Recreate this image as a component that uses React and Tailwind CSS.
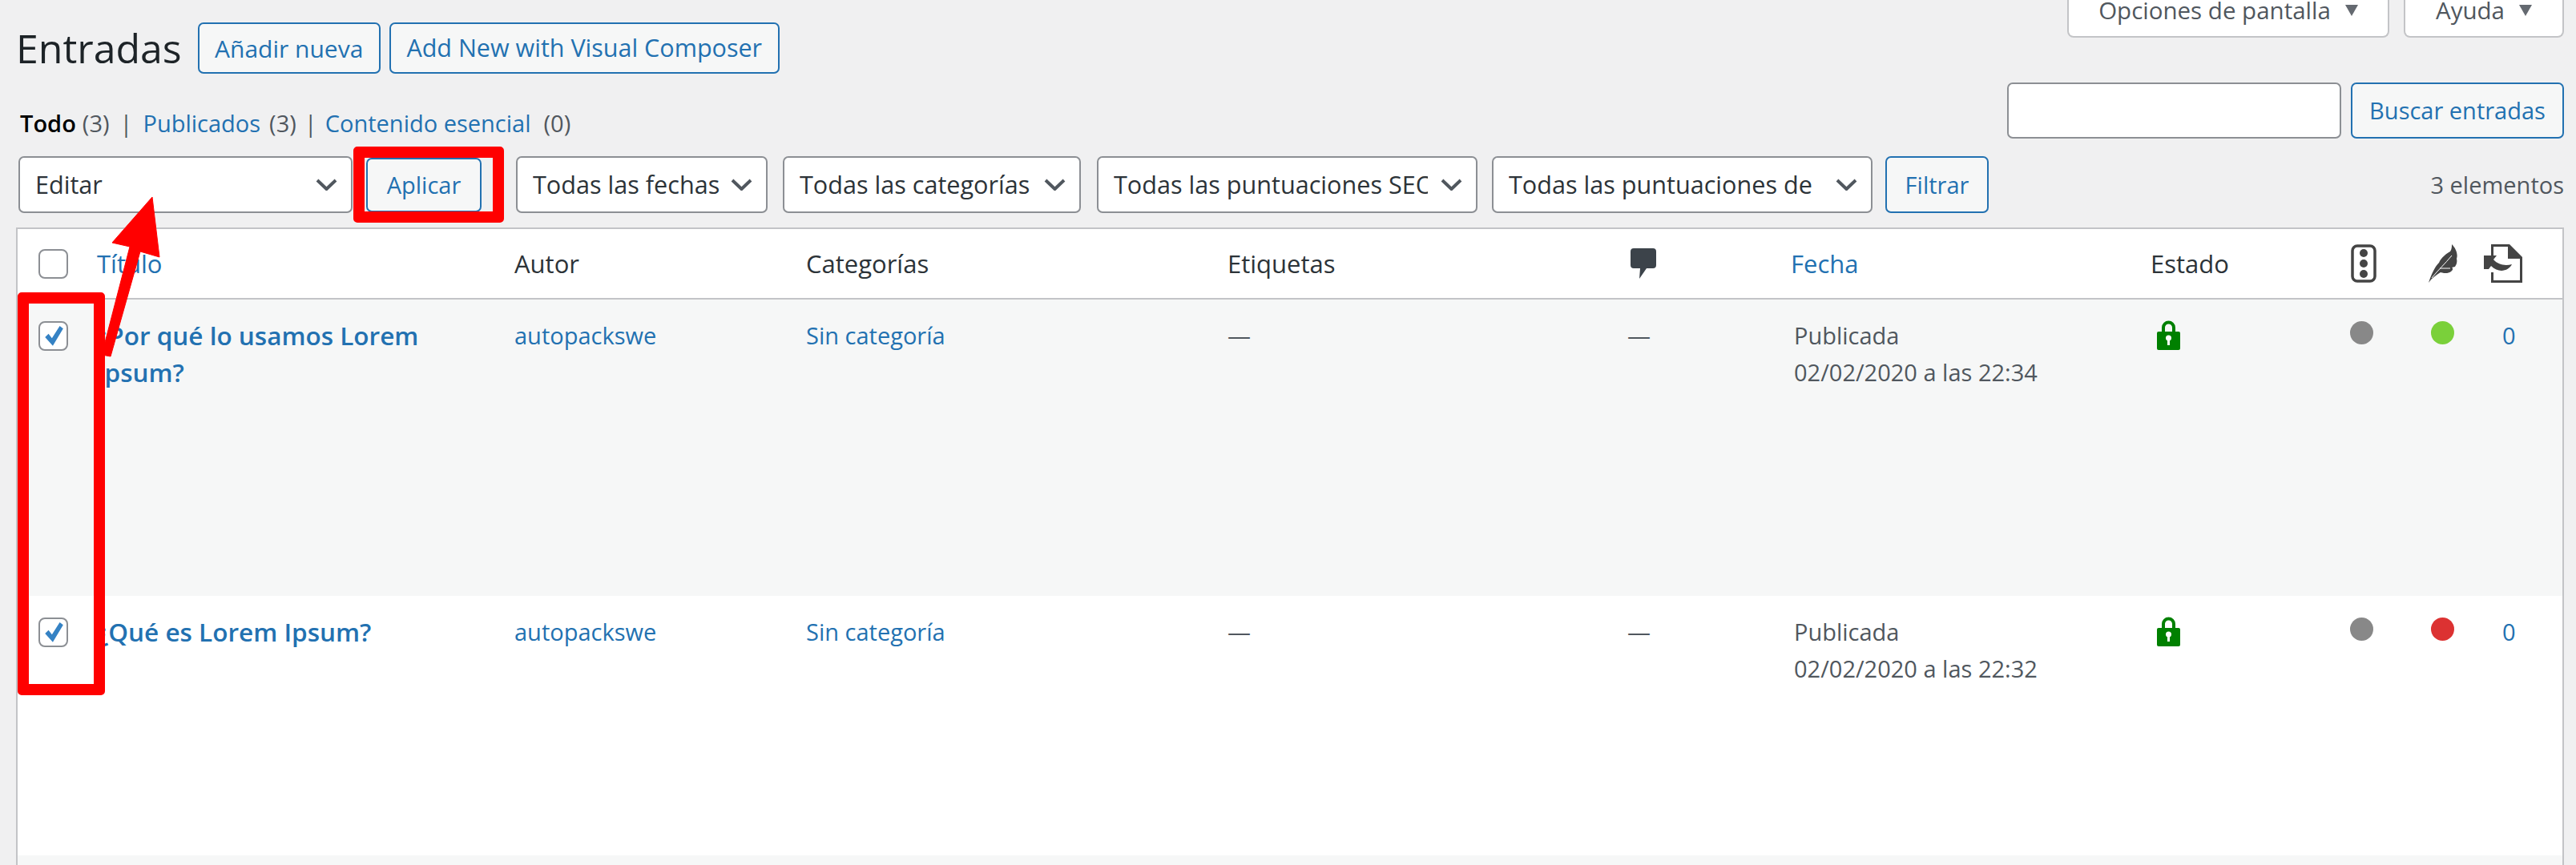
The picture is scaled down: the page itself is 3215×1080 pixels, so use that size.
const Chevron = () => (
  <svg viewBox="0 0 27 15" className="w-[27px] h-[15px] shrink-0">
    <path d="M2 2 L13.5 13 L25 2" fill="none" stroke="#50575e" strokeWidth="4" />
  </svg>
);

const Caret = () => (
  <svg viewBox="0 0 16 14" className="w-[16px] h-[14px] shrink-0">
    <path d="M0 0 H16 L8 14 Z" fill="#646970" />
  </svg>
);

function Select({ label, className, labelClass = 'mr-[8px]' }) {
  return (
    <div className={`h-[71px] flex items-center justify-between pl-[19px] pr-[17px] bg-white border-2 border-[#8c8f94] rounded-[7px] text-[30.6px] text-[#2c3338] ${className}`}>
      <span className={`overflow-hidden whitespace-nowrap ${labelClass}`}>{label}</span>
      <Chevron />
    </div>
  );
}

function OutlineButton({ children, className }) {
  return (
    <div className={`flex items-center justify-center bg-[#f6f7f7] border-2 border-[#2271b1] rounded-[7px] text-[#2271b1] whitespace-nowrap ${className}`}>
      {children}
    </div>
  );
}

function Checkbox({ checked }) {
  return (
    <div className="w-[37px] h-[37px] bg-white border-2 border-[#8c8f94] rounded-[8px] flex items-center justify-center">
      {checked && (
        <svg viewBox="0 0 24 26" className="w-[26px] h-[28px]">
          <path d="M2 14 L6 10 L10 15 L19 1 L23 4 L11 24 Z" fill="#3582c4" />
        </svg>
      )}
    </div>
  );
}

const CommentIcon = () => (
  <svg viewBox="0 0 32 38" className="w-[32px] h-[38px]">
    <path d="M4 0 H28 Q32 0 32 4 V21 Q32 25 28 25 H20 L11 38 L12 25 H4 Q0 25 0 21 V4 Q0 0 4 0 Z" fill="#3c434a" />
  </svg>
);

const TrafficIcon = () => (
  <svg viewBox="0 0 32 48" className="w-[32px] h-[48px]">
    <rect x="2" y="2" width="28" height="44" rx="6" fill="none" stroke="#444" strokeWidth="3.5" />
    <circle cx="16" cy="11" r="5" fill="#444" />
    <circle cx="16" cy="24" r="5" fill="#444" />
    <circle cx="16" cy="37" r="5" fill="#444" />
  </svg>
);

const FeatherIcon = () => (
  <svg viewBox="0 0 36 48" className="w-[36px] h-[48px]">
    <path d="M0 48 C4 36 8 28 13 23 C16 16 22 12 27 9 C29 6 29 3 29 0 C34 5 37 12 35 18 C36 22 35 25 33 28 L29 29 C31 30 30 33 28 34 C24 37 19 36 15 35 C10 38 4 42 0 48 Z" fill="#444" />
    <path d="M4 42 C12 32 20 25 29 14 M14 30 L27 30" fill="none" stroke="#fff" strokeWidth="1" />
  </svg>
);

const LinkedPageIcon = () => (
  <svg viewBox="0 0 48 48" className="w-[48px] h-[48px]">
    <path d="M9 14 V0 H32 L48 16 V48 H9 V35 H12 V45 H45 V18 H30 V3 H12 V14 Z" fill="#444" />
    <path d="M0 14 H16 L12 19 C18 26 27 27 35 25 C31 33 19 37 9 27 L6 31 H0 Z" fill="#444" />
  </svg>
);

const LockIcon = () => (
  <svg viewBox="0 0 29 37" className="w-[29px] h-[37px]">
    <path d="M6 15 V9 A8.5 8.5 0 0 1 23 9 V15 H19 V9 A4.5 4.5 0 0 0 10 9 V15 Z" fill="#008000" />
    <path d="M2 14 H27 Q29 14 29 16 V35 Q29 37 27 37 H2 Q0 37 0 35 V16 Q0 14 2 14 Z" fill="#008000" />
    <circle cx="14.5" cy="22" r="3.5" fill="#fff" />
    <rect x="13" y="23" width="3" height="8" fill="#fff" />
  </svg>
);

const Dot = ({ color }) => <div className={`w-[29px] h-[29px] rounded-full ${color}`} />;

const gridCols = 'grid grid-cols-[80px_521px_364px_526px_503px_200px_449px_250px_97px_67px_1fr]';

function PostRow({ title, date, seoDot, bg, height }) {
  return (
    <div className={`${gridCols} ${bg} ${height} text-[29px] leading-[46px] pt-[22px]`}>
      <div className="pl-[26px] pt-[5px]"><Checkbox checked /></div>
      <a className="pl-[19px] pr-[50px] text-[31.5px] font-semibold text-[#2271b1]">{title}</a>
      <a className="pl-[19px] text-[#2271b1]">autopackswe</a>
      <a className="pl-[19px] text-[#2271b1]">Sin categoría</a>
      <div className="pl-[19px] text-[#50575e]">—</div>
      <div className="pl-[15px] text-[#50575e]">—</div>
      <div className="pl-[23px] text-[#50575e]">
        <div>Publicada</div>
        <div>{date}</div>
      </div>
      <div className="pl-[27px] pt-[4px]"><LockIcon /></div>
      <div className="pl-[18px] pt-[5px]"><Dot color="bg-[#888888]" /></div>
      <div className="pl-[22px] pt-[5px]"><Dot color={seoDot} /></div>
      <a className="pl-[44px] text-[#2271b1]">0</a>
    </div>
  );
}

export default function App() {
  return (
    <div className="relative h-[1080px] overflow-hidden bg-[#f0f0f1] pl-[20px] pr-[15px] text-[#2c3338] font-['Open_Sans','Noto_Sans',sans-serif]">
      {/* Top area */}
      <div className="flex justify-between h-[195px]">
        <div>
          <div className="flex items-center pt-[28px]">
            <h1 className="text-[50px] leading-[64px] text-[#1d2327] mr-[20px]">Entradas</h1>
            <OutlineButton className="w-[228px] h-[64px] font-medium text-[30px] mr-[11px]">Añadir nueva</OutlineButton>
            <OutlineButton className="w-[487px] h-[64px] font-medium text-[30.5px]">Add New with Visual Composer</OutlineButton>
          </div>
          <div className="flex items-center mt-[43px] pl-[5px] text-[29px] leading-[38px] text-[#50575e]">
            <span className="font-semibold text-black">Todo</span>
            <span className="ml-[8px]">(3)</span>
            <span className="mx-[13px]">|</span>
            <a className="text-[#2271b1]">Publicados</a>
            <span className="ml-[11px]">(3)</span>
            <span className="mx-[10px]">|</span>
            <a className="text-[#2271b1]">Contenido esencial</a>
            <span className="ml-[16px]">(0)</span>
          </div>
        </div>
        <div className="flex flex-col items-end">
          <div className="flex gap-[18px] text-[29.5px] text-[#50575e]">
            <div className="w-[402px] h-[47px] bg-white border-2 border-t-0 border-[#c3c4c7] rounded-b-[8px] flex items-start justify-center gap-[18px] leading-[26px]">
              <span>Opciones de pantalla</span>
              <div className="pt-[6px]"><Caret /></div>
            </div>
            <div className="w-[200px] h-[47px] bg-white border-2 border-t-0 border-[#c3c4c7] rounded-b-[8px] flex items-start justify-center gap-[18px] leading-[26px]">
              <span>Ayuda</span>
              <div className="pt-[6px]"><Caret /></div>
            </div>
          </div>
          <div className="flex mt-[56px] gap-[12px]">
            <div className="w-[417px] h-[70px] bg-white border-2 border-[#8c8f94] rounded-[7px]" />
            <OutlineButton className="w-[266px] h-[70px] text-[29px]">Buscar entradas</OutlineButton>
          </div>
        </div>
      </div>

      {/* Bulk actions and filters */}
      <div className="flex items-center h-[71px] pl-[3px]">
        <Select label="Editar" className="w-[417px]" />
        <OutlineButton className="w-[144px] h-[68px] ml-[17px] text-[29px]">Aplicar</OutlineButton>
        <Select label="Todas las fechas" className="w-[314px] ml-[43px]" />
        <Select label="Todas las categorías" className="w-[372px] ml-[19px]" />
        <Select label="Todas las puntuaciones SEO" className="w-[475px] ml-[20px]" labelClass="mr-[16px]" />
        <Select label="Todas las puntuaciones de" className="w-[475px] ml-[18px]" />
        <OutlineButton className="w-[129px] h-[71px] ml-[16px] text-[29px]">Filtrar</OutlineButton>
        <span className="ml-auto text-[29px] text-[#50575e]">3 elementos</span>
      </div>

      {/* Table */}
      <div className="mt-[18px] bg-white border-2 border-[#c3c4c7] border-b-0">
        <div className={`${gridCols} items-center h-[88px] border-b-2 border-[#c3c4c7] text-[31px]`}>
          <div className="pl-[26px]"><Checkbox /></div>
          <a className="pl-[19px] text-[#2271b1]">Título</a>
          <div className="pl-[19px]">Autor</div>
          <div className="pl-[19px]">Categorías</div>
          <div className="pl-[19px]">Etiquetas</div>
          <div className="pl-[19px]"><CommentIcon /></div>
          <a className="pl-[19px] text-[#2271b1]">Fecha</a>
          <div className="pl-[19px]">Estado</div>
          <div className="pl-[19px]"><TrafficIcon /></div>
          <div className="pl-[19px]"><FeatherIcon /></div>
          <div className="pl-[21px]"><LinkedPageIcon /></div>
        </div>
        <PostRow
          title="¿Por qué lo usamos Lorem Ipsum?"
          date="02/02/2020 a las 22:34"
          seoDot="bg-[#7ad03a]"
          bg="bg-[#f6f7f7]"
          height="h-[370px]"
        />
        <PostRow
          title="¿Qué es Lorem Ipsum?"
          date="02/02/2020 a las 22:32"
          seoDot="bg-[#dc3232]"
          bg="bg-white"
          height="h-[324px]"
        />
        <div className="h-[20px] bg-[#f6f7f7]" />
      </div>

      {/* Red annotations drawn over the screenshot */}
      <div className="absolute left-[441px] top-[183px] w-[188px] h-[95px] border-[14px] border-[#ff0000] rounded-[5px]" />
      <div className="absolute left-[22px] top-[365px] w-[109px] h-[503px] border-[14px] border-[#ff0000] rounded-[5px]" />
      <svg className="absolute left-[120px] top-[240px] w-[90px] h-[215px]" viewBox="0 0 90 215">
        <path d="M70 6 L79 81 L55 74 L18 205 L7 203 L42 68 L20 63 Z" fill="#ff0000" stroke="#ff0000" strokeWidth="1" strokeLinejoin="round" />
      </svg>
    </div>
  );
}
